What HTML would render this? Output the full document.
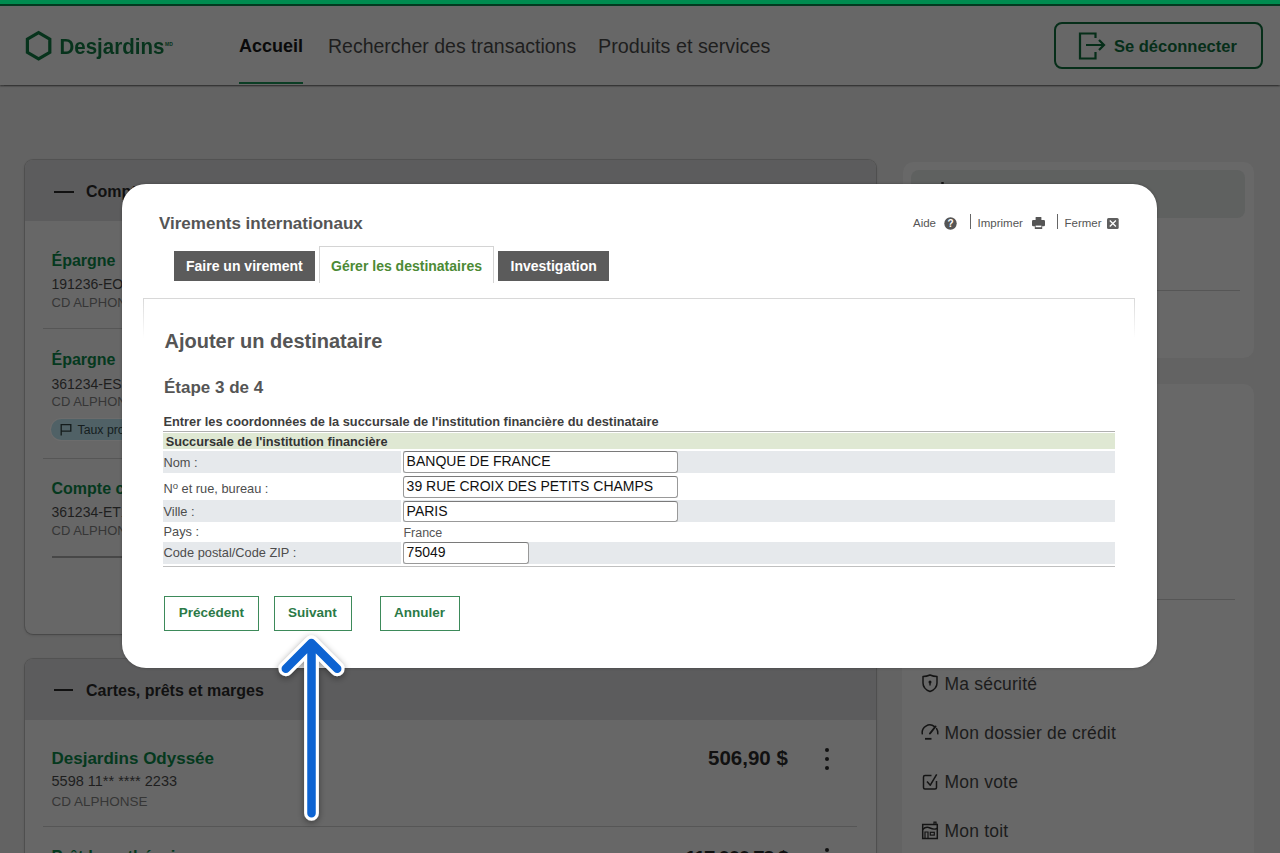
<!DOCTYPE html>
<html lang="fr">
<head>
<meta charset="utf-8">
<style>
*{margin:0;padding:0;box-sizing:border-box}
html,body{width:1280px;height:853px;overflow:hidden}
body{position:relative;background:#636363;font-family:"Liberation Sans",sans-serif;color:#111}
.a{position:absolute;white-space:nowrap}
#stripe{left:0;top:0;width:1280px;height:4px;background:#008c50}
#stripe2{left:0;top:4px;width:1280px;height:2px;background:#023a20}
#header{left:0;top:6px;width:1280px;height:79px;background:#676767;box-shadow:0 1.5px 1.5px rgba(0,0,0,.45)}
.nav{font-size:19.25px;color:#1e1e1e;top:35px;line-height:22px}
.card{background:#676767;border-radius:8px;box-shadow:0 0 0 1px rgba(0,0,0,.14),0 1px 3px rgba(0,0,0,.2)}
.cardhead{background:#5c5c5d;border-radius:8px 8px 0 0}
.green{color:#0d4a2a;font-weight:bold}
.dark{color:#1c1c1c}
.gray{color:#3a3a3a}
.sep{height:1px;background:#565656}
#modal{left:122px;top:184px;width:1035px;height:484px;background:#fff;border-radius:24px;box-shadow:0 0 3px rgba(0,0,0,.3)}
.inp{border:1px solid #999;border-top-color:#7a7a7a;border-radius:3px;background:#fff}
.btn{border:1px solid #3d8a5a}
.dk{color:#111}
.gr{color:#05391e;font-weight:bold}
.lt{color:#363636}
.dot{width:4px;height:4px;border-radius:2px;background:#111}
.dk2{font-size:17.5px;line-height:17px;letter-spacing:0.2px;color:#1c1c1c}
.m{font-family:"Liberation Sans",sans-serif;color:#555}
</style>
</head>
<body>
<div class="a" id="stripe"></div>
<div class="a" id="stripe2"></div>
<div class="a" id="header"></div>

<!-- logo -->
<svg class="a" style="left:24px;top:30px" width="30" height="32" viewBox="0 0 30 32">
  <polygon points="14.6,2.6 25.8,9.1 25.8,22.4 14.6,28.9 3.4,22.4 3.4,9.1" fill="none" stroke="#07331c" stroke-width="3.2" stroke-linejoin="miter"/>
</svg>
<div class="a" style="left:59.5px;top:33.5px;font-size:20.5px;font-weight:bold;color:#07331c;line-height:26px;transform:scaleY(1.1);transform-origin:0 20px">Desjardins</div>
<div class="a" style="left:165px;top:41px;font-size:5px;font-weight:bold;color:#07331c;line-height:6px">MD</div>

<div class="a nav" style="left:239px;font-weight:bold;font-size:18px;color:#0a0a0a">Accueil</div>
<div class="a" style="left:239px;top:82px;width:64px;height:2px;background:#0b3d24"></div>
<div class="a nav" style="left:328px;font-size:19.5px">Rechercher des transactions</div>
<div class="a nav" style="left:598px;font-size:19.75px">Produits et services</div>

<!-- logout -->
<div class="a" style="left:1054px;top:22px;width:209px;height:47px;border:2px solid #062e19;border-radius:8px"></div>
<svg class="a" style="left:1076px;top:30px" width="32" height="32" viewBox="0 0 32 32">
  <path d="M19.5 8 V3.5 H4 V28.5 H19.5 V22" fill="none" stroke="#062e19" stroke-width="2.2"/>
  <path d="M10 15 H28 M23 10 L28 15 L23 20" fill="none" stroke="#062e19" stroke-width="2.2"/>
</svg>
<div class="a" style="left:1114px;top:35.4px;font-size:16.5px;font-weight:bold;color:#062e19;line-height:22px">Se déconnecter</div>

<!-- left card 1 -->
<div class="a card" style="left:25px;top:160px;width:851px;height:474px"></div>
<div class="a cardhead" style="left:25px;top:160px;width:851px;height:61px"></div>

<!-- left card 2 -->
<div class="a card" style="left:25px;top:659px;width:851px;height:220px"></div>
<div class="a cardhead" style="left:25px;top:659px;width:851px;height:61px"></div>

<!-- right panels -->
<div class="a" style="left:903px;top:162px;width:351px;height:196px;background:#686868;border-radius:10px"></div>
<div class="a" style="left:902px;top:384px;width:352px;height:500px;background:#686868;border-radius:10px"></div>


<!-- card 1 content -->
<div class="a" style="left:54px;top:190.5px;width:20px;height:2.2px;background:#111"></div>
<div class="a dk" style="left:86px;top:184.3px;font-size:16px;line-height:16px;font-weight:bold">Comptes</div>
<div class="a gr" style="left:51.5px;top:253px;font-size:16px;line-height:16px">Épargne</div>
<div class="a dk" style="left:51.5px;top:276.5px;font-size:14px;line-height:14px;color:#1e1e1e">191236-EOP</div>
<div class="a lt" style="left:51.5px;top:295.8px;font-size:13px;line-height:13px">CD ALPHONSE</div>
<div class="a sep" style="left:43px;top:328px;width:815px"></div>
<div class="a gr" style="left:51.5px;top:351.5px;font-size:16px;line-height:16px">Épargne</div>
<div class="a dk" style="left:51.5px;top:376.5px;font-size:14px;line-height:14px;color:#1e1e1e">361234-ES1</div>
<div class="a lt" style="left:51.5px;top:395px;font-size:13px;line-height:13px">CD ALPHONSE</div>
<div class="a" style="left:51px;top:418.5px;width:110px;height:21px;border-radius:11px;background:#506166;box-shadow:0 0 0 1px rgba(255,255,255,.04)"></div>
<svg class="a" style="left:58px;top:421px" width="16" height="17" viewBox="0 0 16 17"><path d="M3.2 14.5 V3 M3.2 3.6 H12.8 V10.2 H3.2" fill="none" stroke="#141c1c" stroke-width="1.3"/></svg>
<div class="a dk" style="left:77.5px;top:423.5px;font-size:12.3px;line-height:12px;color:#151d1e">Taux progressif</div>
<div class="a sep" style="left:43px;top:458px;width:815px"></div>
<div class="a gr" style="left:51.5px;top:481.3px;font-size:16px;line-height:16px">Compte courant</div>
<div class="a dk" style="left:51.5px;top:505px;font-size:14px;line-height:14px;color:#1e1e1e">361234-ET1</div>
<div class="a lt" style="left:51.5px;top:523.8px;font-size:13px;line-height:13px">CD ALPHONSE</div>
<div class="a" style="left:51.5px;top:556px;width:806px;height:2px;background:#474747"></div>

<!-- card 2 content -->
<div class="a" style="left:54px;top:689px;width:19px;height:2.2px;background:#111"></div>
<div class="a dk" style="left:86px;top:682.7px;font-size:16px;line-height:16px;font-weight:bold">Cartes, prêts et marges</div>
<div class="a gr" style="left:51.5px;top:749.9px;font-size:17px;line-height:17px">Desjardins Odyssée</div>
<div class="a dk" style="left:51.5px;top:774px;font-size:14.5px;line-height:14.5px;color:#1e1e1e">5598 11** **** 2233</div>
<div class="a lt" style="left:51.5px;top:794.8px;font-size:13.5px;line-height:13.5px">CD ALPHONSE</div>
<div class="a dk" style="left:708px;top:748.2px;font-size:20.5px;line-height:20.5px;font-weight:bold">506,90 $</div>
<div class="a dot" style="left:824.5px;top:748px"></div>
<div class="a dot" style="left:824.5px;top:757px"></div>
<div class="a dot" style="left:824.5px;top:765.5px"></div>
<div class="a sep" style="left:43px;top:826px;width:814px"></div>
<div class="a gr" style="left:51.5px;top:848px;font-size:16.5px;line-height:16.5px">Prêt hypothécaire</div>
<div class="a dk" style="left:685px;top:847.5px;font-size:20.5px;line-height:20.5px;font-weight:bold;letter-spacing:-1.3px">117 000,73 $</div>
<div class="a dot" style="left:824.5px;top:848px"></div>

<!-- right panel content -->
<div class="a" style="left:911px;top:170px;width:334px;height:48px;border-radius:8px;background:#5f6160"></div>
<div class="a sep" style="left:920px;top:289.5px;width:320px"></div>
<div class="a" style="left:940.5px;top:181.5px;width:3px;height:2.5px;border-radius:1px;background:#1a1a1a"></div>
<div class="a sep" style="left:920px;top:598.5px;width:315px"></div>

<svg class="a" style="left:920px;top:673px" width="20" height="22" viewBox="0 0 20 22">
  <path d="M3 3.5 Q6.5 3.5 10 2 Q13.5 3.5 17 3.5 V10 C17 14 14 17 10 18.5 C6 17 3 14 3 10 Z" fill="none" stroke="#141414" stroke-width="1.5" stroke-linejoin="round"/>
  <circle cx="10" cy="9" r="1.5" fill="#141414"/><path d="M10 9.5 V12.5" stroke="#141414" stroke-width="1.4"/>
</svg>
<div class="a dk2" style="left:944.5px;top:675.5px">Ma sécurité</div>
<svg class="a" style="left:920px;top:723px" width="20" height="18" viewBox="0 0 20 18">
  <path d="M2.3 10.8 A7.6 7.6 0 0 1 14.5 3.6" fill="none" stroke="#141414" stroke-width="1.5" stroke-linecap="round"/>
  <path d="M16.6 5.6 A7.6 7.6 0 0 1 17.8 10.8" fill="none" stroke="#141414" stroke-width="1.5" stroke-linecap="round"/>
  <path d="M10 10.5 L15.5 3.5" stroke="#141414" stroke-width="2" stroke-linecap="round"/>
  <path d="M5 15.8 H11.5" stroke="#141414" stroke-width="1.8"/>
</svg>
<div class="a dk2" style="left:944.5px;top:725.2px">Mon dossier de crédit</div>
<svg class="a" style="left:920px;top:772px" width="20" height="20" viewBox="0 0 20 20">
  <path d="M11.5 3.5 H5 Q3.5 3.5 3.5 5 V15.5 Q3.5 17 5 17 H15 Q16.5 17 16.5 15.5 V9" fill="none" stroke="#141414" stroke-width="1.5"/>
  <path d="M7 9.5 L10.3 13.2 L16.7 2.3" fill="none" stroke="#141414" stroke-width="1.5" stroke-linejoin="round"/>
</svg>
<div class="a dk2" style="left:944.5px;top:773.5px">Mon vote</div>
<svg class="a" style="left:920px;top:820px" width="20" height="21" viewBox="0 0 20 21">
  <path d="M2.7 18.5 V4.5 H17.3 V18.5 Z" fill="none" stroke="#141414" stroke-width="1.5"/>
  <path d="M2.7 9.5 Q6 6 10 8 Q14 10 17.3 8.3" fill="none" stroke="#141414" stroke-width="1.4"/>
  <path d="M14 4.5 V2.2 H16 V4.5" fill="none" stroke="#141414" stroke-width="1.2"/>
  <path d="M5 18.5 V12 H8 V18.5" fill="none" stroke="#141414" stroke-width="1.2"/>
  <rect x="10.3" y="12.3" width="4" height="2.8" fill="none" stroke="#141414" stroke-width="1.2"/>
</svg>
<div class="a dk2" style="left:944.5px;top:822.6px">Mon toit</div>

<!-- modal -->
<div class="a" id="modal"></div>

<!-- modal content -->
<div class="a m" style="left:159px;top:214.6px;font-size:17px;line-height:17px;font-weight:bold;color:#555">Virements internationaux</div>

<div class="a" style="left:174px;top:251px;width:141px;height:30px;background:#5b5b5b"></div>
<div class="a m" style="left:186px;top:259px;font-size:14px;line-height:14px;font-weight:bold;color:#fff">Faire un virement</div>
<div class="a" style="left:319px;top:246px;width:175px;height:36.5px;background:#fff;border:1px solid #d4d4d4;border-bottom:none"></div>
<div class="a m" style="left:331px;top:259.3px;font-size:14px;line-height:14px;font-weight:bold;color:#4c8a35">Gérer les destinataires</div>
<div class="a" style="left:498px;top:251px;width:111px;height:30px;background:#5b5b5b"></div>
<div class="a m" style="left:510.5px;top:259.3px;font-size:14px;line-height:14px;font-weight:bold;color:#fff">Investigation</div>

<div class="a m" style="left:913px;top:218.3px;font-size:11.5px;line-height:11.5px;color:#555">Aide</div>
<svg class="a" style="left:944px;top:217px" width="13" height="13" viewBox="0 0 13 13"><circle cx="6.5" cy="6.5" r="6.2" fill="#555"/><text x="6.5" y="10.3" text-anchor="middle" font-family="Liberation Sans" font-weight="bold" font-size="10" fill="#fff">?</text></svg>
<div class="a" style="left:970px;top:214px;width:1px;height:15px;background:#666"></div>
<div class="a m" style="left:977.5px;top:218.3px;font-size:11.5px;line-height:11.5px;color:#555">Imprimer</div>
<svg class="a" style="left:1031.5px;top:216.5px" width="13" height="12.5" viewBox="0 0 13 12.5"><rect x="3.6" y="0" width="5.8" height="3.5" rx="0.5" fill="#555"/><rect x="0" y="3" width="13" height="6.3" rx="1.2" fill="#555"/><rect x="2.8" y="7.5" width="7.4" height="5" rx="0.6" fill="#555"/><rect x="3.6" y="8.6" width="5.8" height="1.6" fill="#fff"/></svg>
<div class="a" style="left:1057px;top:214px;width:1px;height:15px;background:#666"></div>
<div class="a m" style="left:1064.5px;top:218.3px;font-size:11.5px;line-height:11.5px;color:#555">Fermer</div>
<svg class="a" style="left:1107.3px;top:217.8px" width="11.7" height="11" viewBox="0 0 11.7 11"><rect x="0" y="0" width="11.7" height="11" rx="1.5" fill="#5f5f5f"/><path d="M2.8 2.5 L8.9 8.5 M8.9 2.5 L2.8 8.5" stroke="#fff" stroke-width="1.3"/></svg>

<!-- content box -->
<div class="a" style="left:143px;top:298px;width:992px;height:40px;border-top:1px solid #d8d8d8"></div>
<div class="a" style="left:143px;top:298px;width:1px;height:40px;background:linear-gradient(#d8d8d8,rgba(216,216,216,0))"></div>
<div class="a" style="left:1134px;top:298px;width:1px;height:40px;background:linear-gradient(#d8d8d8,rgba(216,216,216,0))"></div>

<div class="a m" style="left:164.5px;top:331.1px;font-size:20px;line-height:20px;font-weight:bold;color:#555">Ajouter un destinataire</div>
<div class="a m" style="left:164px;top:378.9px;font-size:17px;line-height:17px;font-weight:bold;color:#555">Étape 3 de 4</div>
<div class="a m" style="left:163.5px;top:415.9px;font-size:12.8px;line-height:12.8px;font-weight:bold;color:#3d3d3d">Entrer les coordonnées de la succursale de l'institution financière du destinataire</div>

<div class="a" style="left:163px;top:431px;width:952px;height:1px;background:#b0b0b0"></div>
<div class="a" style="left:163px;top:433px;width:952px;height:16px;background:#dfe8d3"></div>
<div class="a m" style="left:165.7px;top:435.7px;font-size:12.75px;line-height:12.75px;font-weight:bold;color:#333">Succursale de l'institution financière</div>

<div class="a" style="left:163px;top:451px;width:238px;height:22px;background:#e6e9ec"></div>
<div class="a" style="left:403px;top:451px;width:712px;height:22px;background:#e6e9ec"></div>
<div class="a" style="left:163px;top:500px;width:238px;height:22px;background:#e6e9ec"></div>
<div class="a" style="left:403px;top:500px;width:712px;height:22px;background:#e6e9ec"></div>
<div class="a" style="left:163px;top:542px;width:238px;height:22px;background:#e6e9ec"></div>
<div class="a" style="left:403px;top:542px;width:712px;height:22px;background:#e6e9ec"></div>
<div class="a" style="left:163px;top:565.5px;width:952px;height:1px;background:#c0c0c0"></div>

<div class="a m" style="left:163.5px;top:456.3px;font-size:12.8px;line-height:13px;color:#4d4d4d">Nom :</div>
<div class="a m" style="left:163.5px;top:481.5px;font-size:12.8px;line-height:13px;color:#4d4d4d">N<span style="font-size:9.5px;position:relative;top:-4px">o</span> et rue, bureau :</div>
<div class="a m" style="left:163.5px;top:505.1px;font-size:12.8px;line-height:13px;color:#4d4d4d">Ville :</div>
<div class="a m" style="left:163.5px;top:525.3px;font-size:12.8px;line-height:13px;color:#4d4d4d">Pays :</div>
<div class="a m" style="left:163.5px;top:546px;font-size:12.8px;line-height:13px;color:#4d4d4d">Code postal/Code ZIP :</div>

<div class="a inp" style="left:403px;top:451px;width:275px;height:22px"></div>
<div class="a inp" style="left:403px;top:475.5px;width:275px;height:22px"></div>
<div class="a inp" style="left:403px;top:500.5px;width:275px;height:21.5px"></div>
<div class="a inp" style="left:403px;top:542px;width:126px;height:21.5px"></div>
<div class="a m" style="left:406.6px;top:454.4px;font-size:14px;line-height:14px;color:#111">BANQUE DE FRANCE</div>
<div class="a m" style="left:406.6px;top:478.7px;font-size:14px;line-height:14px;color:#111">39 RUE CROIX DES PETITS CHAMPS</div>
<div class="a m" style="left:406.6px;top:503.8px;font-size:14px;line-height:14px;color:#111">PARIS</div>
<div class="a m" style="left:403.4px;top:526.7px;font-size:12.5px;line-height:12.5px;color:#555">France</div>
<div class="a m" style="left:406.6px;top:545.3px;font-size:14px;line-height:14px;color:#111">75049</div>

<div class="a btn" style="left:164px;top:596px;width:95px;height:35px"></div>
<div class="a btn" style="left:274px;top:596px;width:78px;height:35px"></div>
<div class="a btn" style="left:380px;top:596px;width:80px;height:35px"></div>
<div class="a m" style="left:178.7px;top:606.1px;font-size:13.5px;line-height:13.5px;font-weight:bold;color:#2b7a47">Précédent</div>
<div class="a m" style="left:288px;top:606.1px;font-size:13.5px;line-height:13.5px;font-weight:bold;color:#2b7a47">Suivant</div>
<div class="a m" style="left:394px;top:606.1px;font-size:13.5px;line-height:13.5px;font-weight:bold;color:#2b7a47">Annuler</div>


<!-- arrow -->
<svg class="a" style="left:250px;top:610px;overflow:visible" width="130" height="240" viewBox="250 610 130 240">
  <defs><filter id="sh" x="-50%" y="-20%" width="200%" height="140%"><feGaussianBlur in="SourceAlpha" stdDeviation="3.5"/><feOffset dx="0" dy="2"/><feComponentTransfer><feFuncA type="linear" slope="0.42"/></feComponentTransfer><feMerge><feMergeNode/><feMergeNode in="SourceGraphic"/></feMerge></filter></defs>
  <g filter="url(#sh)">
    <path d="M311.5 645 V813.3 M285.8 668.8 L311.4 643 L337.2 668.8" fill="none" stroke="#fff" stroke-width="14.8" stroke-linecap="round" stroke-linejoin="round"/>
    <path d="M311.5 645 V813.3 M285.8 668.8 L311.4 643 L337.2 668.8" fill="none" stroke="#0863d2" stroke-width="8.5" stroke-linecap="round" stroke-linejoin="round"/>
  </g>
</svg>

</body>
</html>
